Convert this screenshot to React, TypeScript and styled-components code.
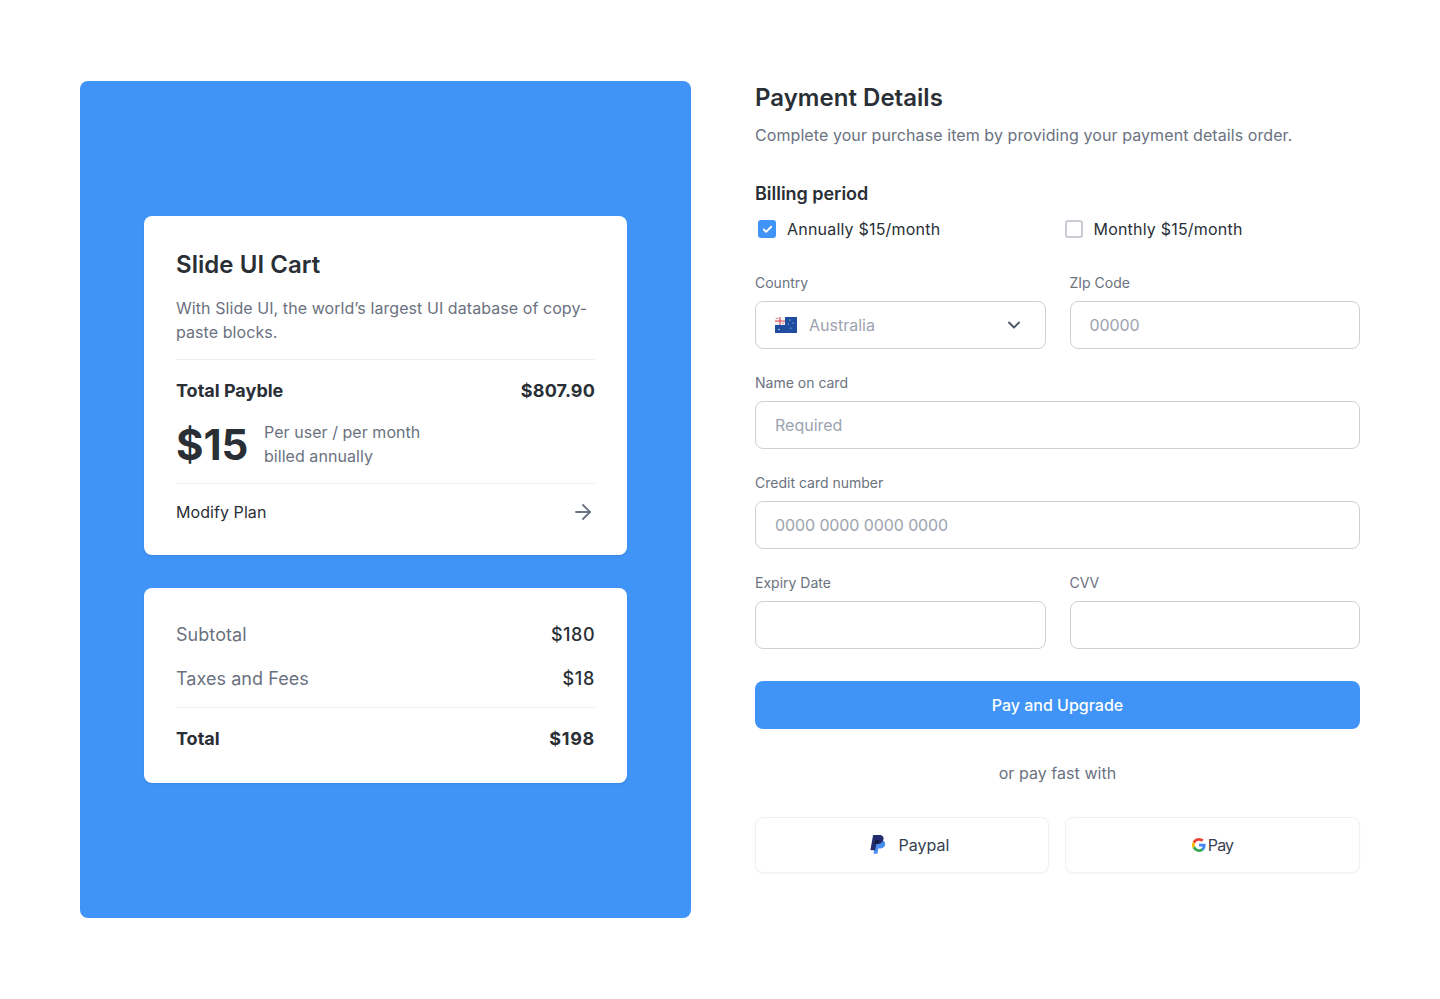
import React from "react";
import styled, { createGlobalStyle } from "styled-components";
import { ChevronDown, ArrowRight, Check } from "lucide-react";

const Global = createGlobalStyle`
  html, body { margin: 0; padding: 0; background: #fff; }
  * { box-sizing: border-box; }
  body { font-family: Inter, "Liberation Sans", sans-serif; color: #2a2f36; -webkit-font-smoothing: antialiased; }
`;

const Page = styled.div`
  width: 1440px;
  height: 999px;
  padding: 81px 80px 81px;
  display: grid;
  grid-template-columns: 611px 605px;
  gap: 64px;
  overflow: hidden;
`;

const BluePanel = styled.section`
  height: 837px;
  background: #4094f7;
  border-radius: 8px;
  padding: 0 64px;
  display: flex;
  flex-direction: column;
  justify-content: center;
  gap: 33px;
`;

const Card = styled.div`
  background: #fff;
  border-radius: 8px;
  box-shadow: 0 1px 2px rgba(30, 60, 120, 0.16);
`;

const CartCard = styled(Card)`
  padding: 33px 32px 0;
  height: 339px;
`;

const SummaryCard = styled(Card)`
  padding: 33px 32px 0;
  height: 195px;
`;

const CardTitle = styled.h2`
  margin: 0 0 15px;
  font-size: 24px;
  line-height: 32px;
  font-weight: 600;
  letter-spacing: 0.05px;
`;

const CardText = styled.p`
  margin: 0;
  font-size: 16px;
  line-height: 24px;
  color: #6b7280;
  letter-spacing: 0.07px;
`;

const Divider = styled.hr<{ $top: number; $bottom: number }>`
  border: 0;
  height: 1px;
  background: #eceef1;
  margin: ${(p) => p.$top}px 0 ${(p) => p.$bottom}px;
`;

const Row = styled.div<{ $height?: number }>`
  display: flex;
  align-items: center;
  justify-content: space-between;
  height: ${(p) => p.$height ?? 24}px;
`;

const Strong = styled.span<{ $track?: number }>`
  font-size: 18px;
  line-height: 28px;
  font-weight: 700;
  letter-spacing: ${(p) => p.$track ?? 0}px;
`;

const PriceRow = styled.div`
  display: flex;
  align-items: center;
  gap: 15.5px;
  margin-top: 15px;
`;

const Price = styled.span`
  font-size: 42px;
  line-height: 50px;
  font-weight: 700;
`;

const PriceNote = styled.div`
  font-size: 16px;
  line-height: 24px;
  color: #6b7280;
  letter-spacing: 0.05px;
  margin-bottom: 2px;
`;

const ModifyLabel = styled.span`
  font-size: 16px;
  line-height: 24px;
  font-weight: 400;
  letter-spacing: 0.07px;
`;

const ArrowIcon = styled(ArrowRight)`
  color: #6b7280;
  width: 24px;
  height: 24px;
`;

const SummaryLabel = styled.span`
  font-size: 18px;
  line-height: 28px;
  color: #6b7280;
  letter-spacing: 0.05px;
`;

const SummaryValue = styled.span<{ $track: number }>`
  font-size: 18px;
  line-height: 28px;
  font-weight: 500;
  letter-spacing: ${(p) => p.$track}px;
`;

const SummaryRows = styled.div`
  display: flex;
  flex-direction: column;
  gap: 16px;
`;

const FormColumn = styled.section`
  display: flex;
  flex-direction: column;
  padding-top: 1px;
`;

const Title = styled.h1`
  margin: 0 0 9px;
  font-size: 24px;
  line-height: 32px;
  font-weight: 600;
  letter-spacing: 0.03px;
`;

const Subtitle = styled.p`
  margin: 0 0 33px;
  font-size: 16px;
  line-height: 24px;
  color: #6b7280;
  letter-spacing: 0.08px;
`;

const SectionTitle = styled.h3`
  margin: 0 0 7px;
  font-size: 18px;
  line-height: 28px;
  font-weight: 600;
  letter-spacing: -0.03px;
`;

const PeriodRow = styled.div`
  display: grid;
  grid-template-columns: 306.5px 1fr;
  height: 28px;
  margin-bottom: 30px;
`;

const PeriodOption = styled.label`
  display: flex;
  align-items: center;
  gap: 11px;
  padding-left: 3px;
  font-size: 16px;
  line-height: 24px;
  font-weight: 400;
  letter-spacing: 0.2px;
`;

const CheckBox = styled.span<{ $on?: boolean }>`
  width: 18px;
  height: 18px;
  border-radius: 3px;
  display: inline-flex;
  align-items: center;
  justify-content: center;
  color: #fff;
  background: ${(p) => (p.$on ? "#4094f7" : "#fff")};
  border: ${(p) => (p.$on ? "0" : "2px solid #c9cdd3")};
`;

const Fields = styled.div`
  display: flex;
  flex-direction: column;
  gap: 24px;
`;

const TwoCols = styled.div`
  display: grid;
  grid-template-columns: 1fr 1fr;
  gap: 24px;
`;

const Field = styled.div`
  display: flex;
  flex-direction: column;
  gap: 8px;
`;

const Label = styled.span`
  font-size: 14px;
  line-height: 20px;
  color: #6b7280;
`;

const InputBox = styled.div<{ $digits?: boolean }>`
  height: 48px;
  border: 1px solid #cdd1d6;
  border-radius: 8px;
  padding: 0 19px;
  display: flex;
  align-items: center;
  font-size: 16px;
  line-height: 24px;
  color: #9ca3af;
  background: #fff;
  letter-spacing: ${(p) => (p.$digits ? "-0.1px" : "0")};
`;

const FlagSlot = styled.svg`
  margin-right: 12px;
  flex: none;
`;

const SelectChevron = styled(ChevronDown)`
  margin-left: auto;
  color: #4b5563;
  width: 20px;
  height: 20px;
  margin-right: 2px;
`;

const PayButton = styled.button`
  margin-top: 32px;
  height: 48px;
  border: 0;
  border-radius: 8px;
  background: #4094f7;
  color: #fff;
  font: 500 16px/24px Inter, "Liberation Sans", sans-serif;
`;

const OrText = styled.p`
  margin: 32px 0;
  text-align: center;
  font-size: 16px;
  line-height: 24px;
  color: #6b7280;
  letter-spacing: 0.05px;
`;

const AltRow = styled.div`
  display: grid;
  grid-template-columns: 294px 1fr;
  gap: 16px;
`;

const AltButton = styled.button`
  height: 56px;
  background: #fff;
  border: 1px solid #f0f1f3;
  border-radius: 8px;
  box-shadow: 0 1px 2px rgba(17, 24, 39, 0.04);
  display: flex;
  align-items: center;
  justify-content: center;
  gap: 13px;
  padding-left: 21px;
  color: #374151;
  font: 400 16px/24px Inter, "Liberation Sans", sans-serif;
`;

const GButton = styled(AltButton)`
  gap: 2px;
  padding: 0;
  letter-spacing: -0.9px;
`;

const AustraliaFlag = () => (
  <FlagSlot width="22" height="16" viewBox="0 0 22 16">
    <rect width="22" height="16" fill="#1f4ea1" />
    <rect width="10" height="8" fill="#f5f3f3" />
    <rect x="4.4" width="1.1" height="8" fill="#d8465a" />
    <rect y="3.5" width="10" height="1.1" fill="#d8465a" />
    <rect x="1" y="1" width="2.2" height="1" fill="#e58a96" />
    <rect x="6.8" y="5.8" width="2.2" height="1" fill="#e58a96" />
    <circle cx="4" cy="12.5" r=".8" fill="#cfdaf0" />
    <circle cx="15" cy="3" r=".6" fill="#cfdaf0" />
    <circle cx="18" cy="6" r=".6" fill="#cfdaf0" />
    <circle cx="13.5" cy="7" r=".6" fill="#cfdaf0" />
    <circle cx="16" cy="11" r=".6" fill="#cfdaf0" />
  </FlagSlot>
);

const PaypalIcon = () => (
  <svg width="16" height="20" viewBox="0 0 16 20">
    <path d="M5 5.5h6.4c2.6 0 4.2 1.5 3.8 3.9-.5 2.7-2.5 4.1-5.1 4.1H8.3l-.8 4.7c-.1.4-.3.6-.7.6H3.6z" fill="#4a8ff0" />
    <path d="M3.7 0h5.5c3 0 4.8 1.6 4.3 4.3-.5 3-2.7 4.7-5.6 4.7H6.3l-1 5.7c-.1.3-.3.5-.6.5H1c-.4 0-.6-.3-.5-.7L3 .6c.1-.4.3-.6.7-.6z" fill="#232c6e" />
    <path d="M5.3 5.3h4.2c.2 1.9-1 3.7-3.2 3.7H4.6z" fill="#14183f" />
  </svg>
);

const GoogleIcon = () => (
  <svg width="14" height="14" viewBox="0 0 48 48">
    <path fill="#EA4335" d="M24 9.5c3.5 0 6.7 1.2 9.2 3.6l6.9-6.9C35.9 2.4 30.5 0 24 0 14.6 0 6.5 5.4 2.6 13.2l8 6.2C12.4 13.7 17.7 9.5 24 9.5z" />
    <path fill="#4285F4" d="M46.5 24.5c0-1.6-.1-3.1-.4-4.5H24v9h12.7c-.6 2.9-2.2 5.4-4.7 7.1l7.7 6c4.5-4.2 6.8-10.3 6.8-17.6z" />
    <path fill="#FBBC05" d="M10.5 28.6c-.5-1.4-.8-3-.8-4.6s.3-3.2.8-4.6l-8-6.2C.9 16.5 0 20.1 0 24s.9 7.5 2.6 10.8z" />
    <path fill="#34A853" d="M24 48c6.5 0 11.9-2.1 15.9-5.9l-7.7-6c-2.1 1.5-4.9 2.3-8.1 2.3-6.3 0-11.6-4.2-13.5-9.9l-8 6.2C6.5 42.6 14.6 48 24 48z" />
  </svg>
);

export default function App() {
  return (
    <Page>
      <Global />
      <BluePanel>
        <CartCard>
          <CardTitle>Slide UI Cart</CardTitle>
          <CardText>With Slide UI, the world’s largest UI database of copy-paste blocks.</CardText>
          <Divider $top={15} $bottom={17} />
          <Row $height={28}>
            <Strong>Total Payble</Strong>
            <Strong $track={0.15}>$807.90</Strong>
          </Row>
          <PriceRow>
            <Price>$15</Price>
            <PriceNote>
              Per user / per month
              <br />
              billed annually
            </PriceNote>
          </PriceRow>
          <Divider $top={13} $bottom={16} />
          <Row>
            <ModifyLabel>Modify Plan</ModifyLabel>
            <ArrowIcon strokeWidth={1.8} />
          </Row>
        </CartCard>
        <SummaryCard>
          <SummaryRows>
            <Row $height={28}>
              <SummaryLabel>Subtotal</SummaryLabel>
              <SummaryValue $track={0.5}>$180</SummaryValue>
            </Row>
            <Row $height={28}>
              <SummaryLabel>Taxes and Fees</SummaryLabel>
              <SummaryValue $track={0.7}>$18</SummaryValue>
            </Row>
          </SummaryRows>
          <Divider $top={14} $bottom={17} />
          <Row $height={28}>
            <Strong>Total</Strong>
            <Strong $track={0.7}>$198</Strong>
          </Row>
        </SummaryCard>
      </BluePanel>
      <FormColumn>
        <Title>Payment Details</Title>
        <Subtitle>Complete your purchase item by providing your payment details order.</Subtitle>
        <SectionTitle>Billing period</SectionTitle>
        <PeriodRow>
          <PeriodOption>
            <CheckBox $on>
              <Check size={11} strokeWidth={4} />
            </CheckBox>
            Annually $15/month
          </PeriodOption>
          <PeriodOption>
            <CheckBox />
            Monthly $15/month
          </PeriodOption>
        </PeriodRow>
        <Fields>
          <TwoCols>
            <Field>
              <Label>Country</Label>
              <InputBox>
                <AustraliaFlag />
                Australia
                <SelectChevron strokeWidth={2.2} />
              </InputBox>
            </Field>
            <Field>
              <Label>ZIp Code</Label>
              <InputBox $digits>00000</InputBox>
            </Field>
          </TwoCols>
          <Field>
            <Label>Name on card</Label>
            <InputBox>Required</InputBox>
          </Field>
          <Field>
            <Label>Credit card number</Label>
            <InputBox $digits>0000 0000 0000 0000</InputBox>
          </Field>
          <TwoCols>
            <Field>
              <Label>Expiry Date</Label>
              <InputBox />
            </Field>
            <Field>
              <Label>CVV</Label>
              <InputBox />
            </Field>
          </TwoCols>
        </Fields>
        <PayButton>Pay and Upgrade</PayButton>
        <OrText>or pay fast with</OrText>
        <AltRow>
          <AltButton>
            <PaypalIcon />
            Paypal
          </AltButton>
          <GButton>
            <GoogleIcon />
            Pay
          </GButton>
        </AltRow>
      </FormColumn>
    </Page>
  );
}
